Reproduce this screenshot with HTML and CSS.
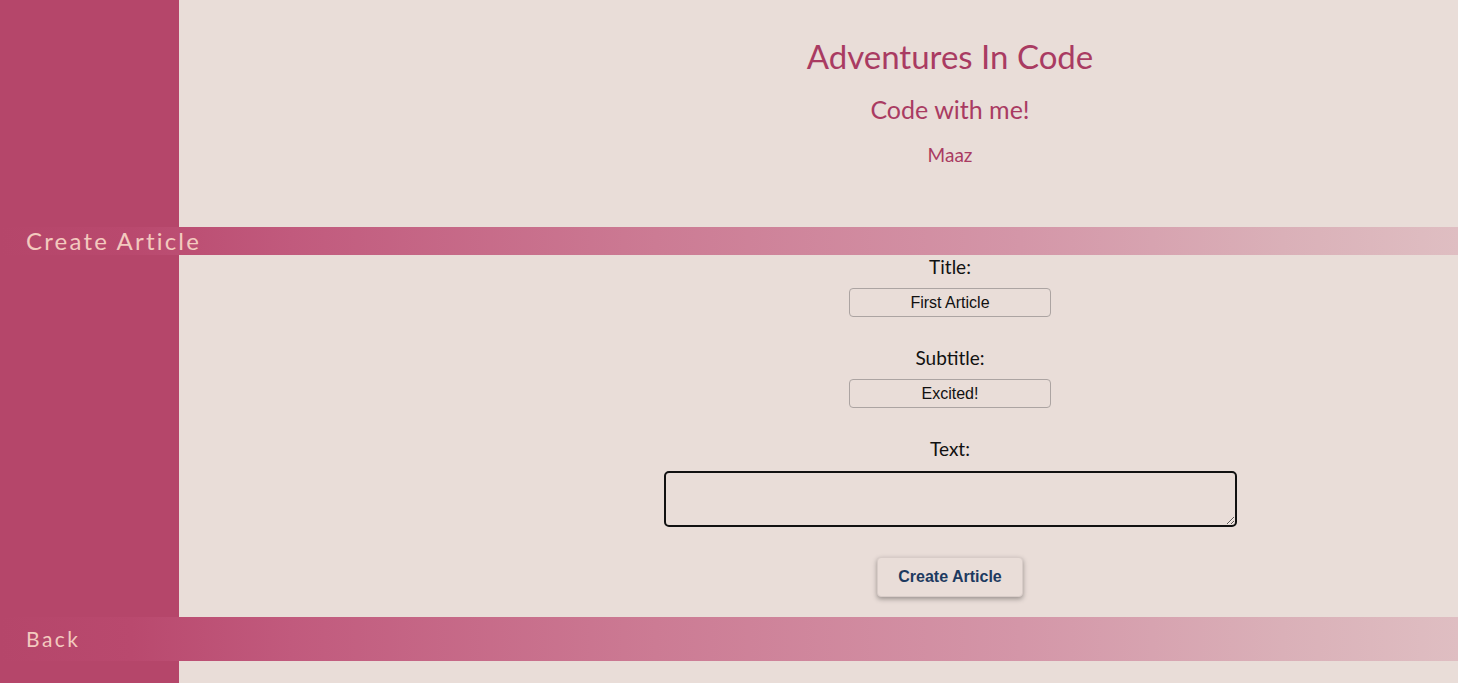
FILE: index.html
```html
<!DOCTYPE html>
<html lang="en">
<head>
<meta charset="utf-8">
<title>Adventures In Code</title>
<link rel="stylesheet" href="styles.css">
</head>
<body>
  <header class="site-header">
    <h1 class="site-title">Adventures In Code</h1>
    <h2 class="site-tagline">Code with me!</h2>
    <p class="site-author">Maaz</p>
  </header>
  <div class="nav-bar nav-bar--create"><span class="nav-label">Create Article</span></div>
  <form class="article-form">
    <div class="field">
      <label class="field-label" for="title">Title:</label>
      <input class="field-input" id="title" type="text" value="First Article">
    </div>
    <div class="field">
      <label class="field-label" for="subtitle">Subtitle:</label>
      <input class="field-input" id="subtitle" type="text" value="Excited!">
    </div>
    <div class="field">
      <label class="field-label" for="text">Text:</label>
      <textarea class="field-textarea" id="text"></textarea>
    </div>
    <button class="submit-btn" type="button">Create Article</button>
  </form>
  <div class="nav-bar nav-bar--back"><span class="nav-label nav-label--back">Back</span></div>
</body>
</html>
```
FILE: styles.css
```css
html, body {
  margin: 0;
  padding: 0;
  height: 100%;
}
body {
  font-family: "Lato", "Open Sans", sans-serif;
  background: linear-gradient(to right, #b5466a 0, #b5466a 179px, #e9ddd8 179px, #e9ddd8 100%);
  overflow: hidden;
}
.site-header {
  height: 227px;
  box-sizing: border-box;
  padding-left: 442px;
  padding-top: 37px;
  text-align: center;
  color: #a93b62;
}
.site-title {
  margin: 0;
  font-size: 33px;
  font-weight: 400;
  line-height: 38px;
}
.site-tagline {
  margin: 19px 0 0;
  font-size: 25px;
  font-weight: 400;
  line-height: 30px;
}
.site-author {
  margin: 19px 0 0;
  font-size: 19px;
  line-height: 24px;
}
.nav-bar {
  display: flex;
  align-items: center;
  padding-left: 26px;
  background: linear-gradient(to right, #b5466a 0, #b9496e 9%, #c15a7d 20%, #cc7b94 45%, #d496a8 70%, #dab0b8 88%, #dfbec2 100%);
}
.nav-bar--create {
  height: 28px;
}
.nav-bar--back {
  height: 44px;
  margin-top: 20px;
}
.nav-label {
  color: #f3cabf;
  font-size: 24px;
  letter-spacing: 2.2px;
  line-height: 28px;
}
.nav-label--back {
  font-size: 21px;
  letter-spacing: 2.5px;
}
.article-form {
  display: flex;
  flex-direction: column;
  align-items: center;
  padding-left: 442px;
}
.field {
  display: flex;
  flex-direction: column;
  align-items: center;
  margin-bottom: 29px;
}
.field-label {
  font-size: 19px;
  line-height: 20px;
  color: #111;
  margin-top: 2px;
  margin-bottom: 11px;
}
.field-input {
  box-sizing: border-box;
  width: 202px;
  height: 29px;
  border: 1px solid #aca4a2;
  border-radius: 4px;
  background: transparent;
  font-family: "Liberation Sans", Arial, sans-serif;
  font-size: 16px;
  text-align: center;
  color: #111;
  padding: 0 4px;
}
.field-textarea {
  box-sizing: border-box;
  width: 573px;
  height: 56px;
  margin-top: 1px;
  border: 2px solid #111;
  border-radius: 5px;
  background: transparent;
  outline: none;
  resize: both;
}
.submit-btn {
  box-sizing: border-box;
  width: 146px;
  height: 40px;
  margin-top: 1px;
  background: #e9ddd8;
  border: 1px solid #d8ccc8;
  border-radius: 4px;
  box-shadow: 0 2px 5px rgba(0, 0, 0, 0.35);
  font-family: "Liberation Sans", Arial, sans-serif;
  font-weight: 700;
  font-size: 16px;
  color: #1d3a60;
}
```
